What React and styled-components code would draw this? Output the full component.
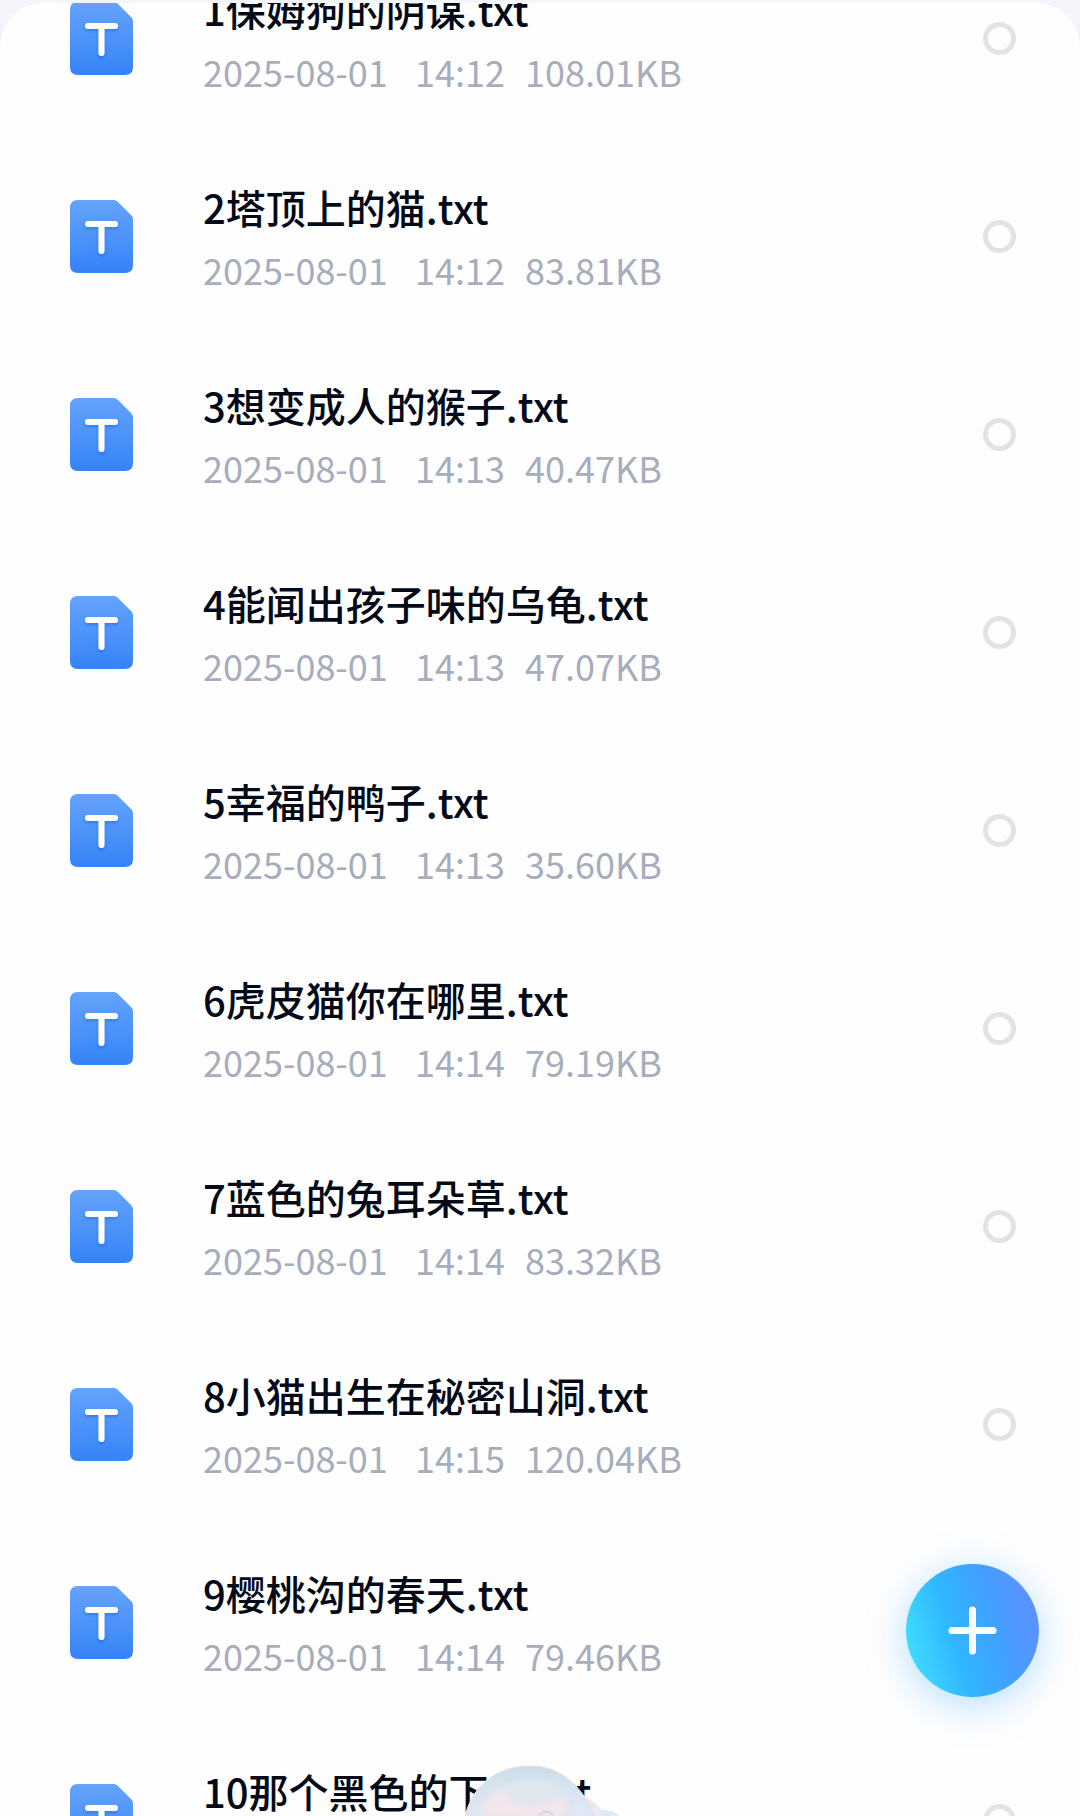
import React from 'react';
import styled, { createGlobalStyle } from 'styled-components';

const files = [
	{ name: '1保姆狗的阴谋.txt', date: '2025-08-01', time: '14:12', size: '108.01KB' },
	{ name: '2塔顶上的猫.txt', date: '2025-08-01', time: '14:12', size: '83.81KB' },
	{ name: '3想变成人的猴子.txt', date: '2025-08-01', time: '14:13', size: '40.47KB' },
	{ name: '4能闻出孩子味的乌龟.txt', date: '2025-08-01', time: '14:13', size: '47.07KB' },
	{ name: '5幸福的鸭子.txt', date: '2025-08-01', time: '14:13', size: '35.60KB' },
	{ name: '6虎皮猫你在哪里.txt', date: '2025-08-01', time: '14:14', size: '79.19KB' },
	{ name: '7蓝色的兔耳朵草.txt', date: '2025-08-01', time: '14:14', size: '83.32KB' },
	{ name: '8小猫出生在秘密山洞.txt', date: '2025-08-01', time: '14:15', size: '120.04KB' },
	{ name: '9樱桃沟的春天.txt', date: '2025-08-01', time: '14:14', size: '79.46KB' },
	{ name: '10那个黑色的下午.txt' },
];

const TextFileIcon = () => (
	<FileSvg viewBox='0 0 63 73' aria-hidden='true'>
		<defs>
			<linearGradient id='fileFill' x1='0' y1='0' x2='0' y2='1'>
				<stop offset='0' stopColor='#65a3fb' />
				<stop offset='1' stopColor='#3583f8' />
			</linearGradient>
			<filter id='letterShadow' x='-20%' y='-20%' width='140%' height='150%'>
				<feDropShadow dx='0' dy='2' stdDeviation='1.5' floodColor='#1560d8' floodOpacity='0.5' />
			</filter>
		</defs>
		<path
			d='M8 0H44Q46 0 48 2L61 15Q63 17 63 19V65Q63 73 55 73H8Q0 73 0 65V8Q0 0 8 0Z'
			fill='url(#fileFill)'
		/>
		<path
			d='M18 24H45M31.5 24V51'
			fill='none'
			stroke='#fff'
			strokeWidth='6'
			strokeLinecap='round'
			filter='url(#letterShadow)'
		/>
	</FileSvg>
);

const FileRow = ({ file, index }) => (
	<Row>
		<TextFileIcon />
		<Info htmlFor={`file-${index}`}>
			<Name>{file.name}</Name>
			<Meta>
				<span>{file.date}</span>
				<span>{file.time}</span>
				<span>{file.size}</span>
			</Meta>
		</Info>
		<Check type='checkbox' id={`file-${index}`} />
	</Row>
);

const Mascot = () => (
	<MascotSvg viewBox='0 0 170 51' aria-hidden='true'>
		<defs>
			<linearGradient id='head' x1='0' y1='0' x2='0' y2='1'>
				<stop offset='0' stopColor='#ccdce8' />
				<stop offset='0.4' stopColor='#d6e4f0' />
				<stop offset='1' stopColor='#e0e6f2' />
			</linearGradient>
			<filter id='soft' x='-10%' y='-20%' width='120%' height='140%'>
				<feGaussianBlur stdDeviation='2' />
			</filter>
		</defs>
		<path d='M118 33Q134 38 144 51H112Z' fill='#e2ebf8' />
		<path d='M138 45Q148 44 156 51H140Z' fill='#dceafa' />
		<path
			d='M1 51C9 20 32 1 67 1C91 1 108 14 120 31Q128 40 131 51Z'
			fill='url(#head)'
			stroke='#ebe1e2'
			strokeWidth='1'
		/>
		<g filter='url(#soft)'>
			<path d='M12 51C15 34 30 20 56 16C80 13 98 20 104 32L102 51Z' fill='#dfe6f0' />
			<path d='M16 51C18 38 28 27 42 24C42 34 50 41 66 41C80 40 92 33 104 35L101 51Z' fill='#f0e6eb' />
			<path d='M110 51C108 42 108 36 112 32L126 51Z' fill='#dfe9f6' />
		</g>
		<path d='M76 50Q81 43 89 50' fill='none' stroke='#d5d6e2' strokeWidth='2' />
		<path d='M116 30Q132 37 139 51' fill='none' stroke='#f1e6ea' strokeWidth='2' />
	</MascotSvg>
);

const App = () => {
	return (
		<>
			<GlobalStyle />
			<Page>
				<Sheet>
					<List>
						{files.map((file, index) => (
							<FileRow key={file.name} file={file} index={index} />
						))}
					</List>
				</Sheet>
				<Mascot />
				<AddButton type='button' aria-label='添加'>
					<svg width='49' height='49' viewBox='0 0 49 49' aria-hidden='true'>
						<path d='M24.5 4V45M4 24.5H45' stroke='#fff' strokeWidth='7' strokeLinecap='round' />
					</svg>
				</AddButton>
			</Page>
		</>
	);
};

const GlobalStyle = createGlobalStyle`
	* {
		box-sizing: border-box;
	}
	body {
		margin: 0;
		background: #f4f5fa;
		font-family: 'Noto Sans CJK SC', sans-serif;
	}
`;

const Page = styled.main`
	position: relative;
	height: 100vh;
	padding-top: 3px;
	overflow: hidden;
`;

const Sheet = styled.section`
	height: 100%;
	overflow: hidden;
	background: #fefefe;
	border-radius: 44px 44px 0 0;
`;

/* the list is scrolled part of the way into its first row */
const List = styled.ul`
	margin: -64px 0 0;
	padding: 0;
	list-style: none;
`;

const Row = styled.li`
	display: flex;
	align-items: center;
	height: 198px;
	padding: 0 64px 0 70px;
`;

const FileSvg = styled.svg`
	flex: none;
	width: 63px;
	height: 73px;
`;

const Info = styled.label`
	flex: 1;
	min-width: 0;
	margin-left: 70px;
`;

const Name = styled.div`
	color: #050a18;
	font-size: 40px;
	font-weight: 500;
	line-height: 60px;
	white-space: nowrap;
`;

const Meta = styled.div`
	display: grid;
	grid-template-columns: 212px 110px auto;
	min-height: 52px;
	margin-top: 6px;
	color: #a7adbc;
	font-size: 36px;
	font-weight: 400;
	line-height: 52px;
	white-space: nowrap;
`;

const Check = styled.input`
	flex: none;
	appearance: none;
	width: 33px;
	height: 33px;
	margin: 0;
	border: 5px solid #e3e3e3;
	border-radius: 50%;
	&:checked {
		border-color: #3583f8;
		background: #3583f8;
	}
`;

const MascotSvg = styled.svg`
	position: absolute;
	bottom: 0;
	left: 43%;
	width: 170px;
	height: 51px;
`;

const AddButton = styled.button`
	position: absolute;
	right: 41px;
	bottom: 119px;
	display: flex;
	align-items: center;
	justify-content: center;
	width: 133px;
	height: 133px;
	padding: 0;
	border: 0;
	border-radius: 50%;
	background: linear-gradient(74deg, #40dcff 8%, #2fb6ff 38%, #429fff 65%, #628fff 95%);
	box-shadow: 0 8px 40px rgba(50, 160, 255, 0.35);
`;

export default App;
